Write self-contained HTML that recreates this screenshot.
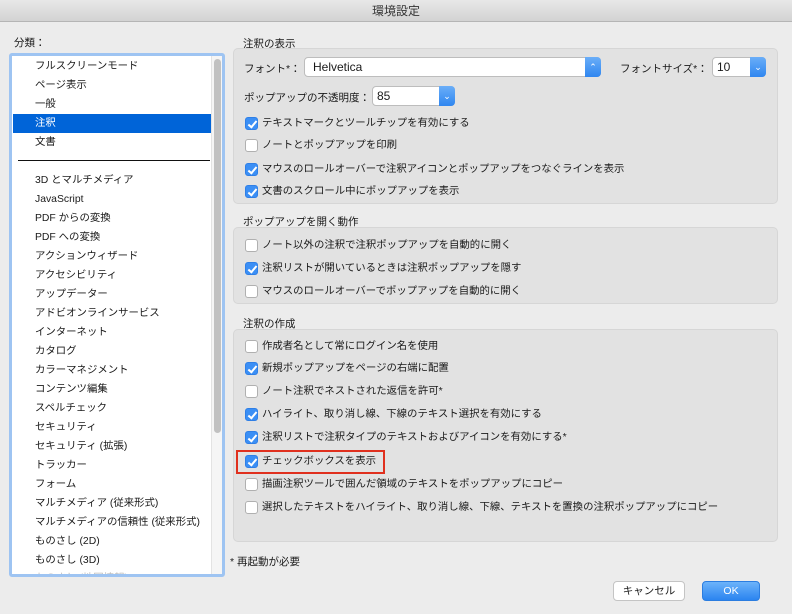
<!DOCTYPE html>
<html><head><meta charset="utf-8"><style>
*{margin:0;padding:0;box-sizing:border-box}
body{width:792px;height:614px;background:#ececec;font-family:"Liberation Sans","Noto Sans CJK JP",sans-serif;font-size:10.5px;color:#1a1a1a;position:relative;overflow:hidden}
.a{position:absolute;white-space:nowrap}
.title{left:0;top:0;width:792px;height:22px;background:linear-gradient(#e8e8e8,#d3d3d3);border-bottom:1px solid #b5b5b5;text-align:center;line-height:22px;font-size:12px;color:#333}
.list{left:9px;top:53px;width:216px;height:524px;border:3px solid #9ec4f2;border-radius:3px;background:#fff;overflow:hidden}
.li{position:absolute;left:23px;height:19px;line-height:19px;font-size:10.4px}
.sel{background:#0064d8;color:#fff;left:1px;width:198px;padding-left:22px}
.sb{position:absolute;left:199px;top:0;width:11px;height:100%;background:#f5f5f5;border-left:1px solid #e3e3e3}
.thumb{position:absolute;left:2px;top:3px;width:7px;height:374px;background:#c1c1c1;border-radius:4px}
.box{background:#e2e2e2;border:1px solid #d6d6d6;border-radius:5px}
.cb{position:absolute;left:245px;width:13px;height:13px;border-radius:3px;background:#fff;border:1px solid #b0b0b0}
.cb.on{background:#3b8ff5;border-color:#2f7fe6}
.cb.on::after{content:"";position:absolute;left:3.5px;top:1px;width:3px;height:7px;border:solid #fff;border-width:0 2px 2px 0;transform:rotate(40deg)}
.ct{position:absolute;left:262px;font-size:10.4px;line-height:14px}
.sel2{background:#fff;border:1px solid #bdbdbd;border-radius:4px;height:20px;line-height:18px;padding-left:8px;font-size:12px}
.arr{position:absolute;right:-1px;top:-1px;width:16px;height:20px;background:linear-gradient(#6aaef8,#2f86f0);border-radius:0 4px 4px 0;color:#fff;font-size:9px;text-align:center;line-height:20px}
.btn{height:20px;line-height:18px;text-align:center;border-radius:4px;font-size:10.5px}
</style></head><body>
<div class="a title">環境設定</div>
<div class="a" style="left:14px;top:35px">分類：</div>
<div class="a list">
<div class="li" style="top:1px">フルスクリーンモード</div>
<div class="li" style="top:20px">ページ表示</div>
<div class="li" style="top:39px">一般</div>
<div class="li sel" style="top:58px">注釈</div>
<div class="li" style="top:77px">文書</div>
<div style="position:absolute;left:6px;top:104px;width:192px;height:1px;background:#111"></div>
<div class="li" style="top:115px">3D とマルチメディア</div>
<div class="li" style="top:134px">JavaScript</div>
<div class="li" style="top:153px">PDF からの変換</div>
<div class="li" style="top:172px">PDF への変換</div>
<div class="li" style="top:191px">アクションウィザード</div>
<div class="li" style="top:210px">アクセシビリティ</div>
<div class="li" style="top:229px">アップデーター</div>
<div class="li" style="top:248px">アドビオンラインサービス</div>
<div class="li" style="top:267px">インターネット</div>
<div class="li" style="top:286px">カタログ</div>
<div class="li" style="top:305px">カラーマネジメント</div>
<div class="li" style="top:324px">コンテンツ編集</div>
<div class="li" style="top:343px">スペルチェック</div>
<div class="li" style="top:362px">セキュリティ</div>
<div class="li" style="top:381px">セキュリティ (拡張)</div>
<div class="li" style="top:400px">トラッカー</div>
<div class="li" style="top:419px">フォーム</div>
<div class="li" style="top:438px">マルチメディア (従来形式)</div>
<div class="li" style="top:457px">マルチメディアの信頼性 (従来形式)</div>
<div class="li" style="top:476px">ものさし (2D)</div>
<div class="li" style="top:495px">ものさし (3D)</div>
<div class="li" style="top:513px;color:#bbb">ものさし (地図情報)</div>
<div class="sb"><div class="thumb"></div></div>
</div>

<div class="a" style="left:243px;top:36px">注釈の表示</div>
<div class="a box" style="left:233px;top:48px;width:545px;height:156px"></div>
<div class="a" style="left:244px;top:61px">フォント*：</div>
<div class="a sel2" style="left:304px;top:57px;width:297px">Helvetica<div class="arr">⌃</div></div>
<div class="a" style="left:620px;top:61px">フォントサイズ*：</div>
<div class="a sel2" style="left:712px;top:57px;width:54px;padding-left:4px">10<div class="arr">⌄</div></div>
<div class="a" style="left:244px;top:90px">ポップアップの不透明度：</div>
<div class="a sel2" style="left:372px;top:86px;width:83px;padding-left:4px">85<div class="arr">⌄</div></div>
<div class="cb on" style="top:117px"></div><div class="ct" style="top:117px">テキストマークとツールチップを有効にする</div>
<div class="cb" style="top:139px"></div><div class="ct" style="top:139px">ノートとポップアップを印刷</div>
<div class="cb on" style="top:163px"></div><div class="ct" style="top:163px">マウスのロールオーバーで注釈アイコンとポップアップをつなぐラインを表示</div>
<div class="cb on" style="top:185px"></div><div class="ct" style="top:185px">文書のスクロール中にポップアップを表示</div>

<div class="a" style="left:243px;top:214px">ポップアップを開く動作</div>
<div class="a box" style="left:233px;top:227px;width:545px;height:77px"></div>
<div class="cb" style="top:239px"></div><div class="ct" style="top:239px">ノート以外の注釈で注釈ポップアップを自動的に開く</div>
<div class="cb on" style="top:262px"></div><div class="ct" style="top:262px">注釈リストが開いているときは注釈ポップアップを隠す</div>
<div class="cb" style="top:285px"></div><div class="ct" style="top:285px">マウスのロールオーバーでポップアップを自動的に開く</div>

<div class="a" style="left:243px;top:316px">注釈の作成</div>
<div class="a box" style="left:233px;top:329px;width:545px;height:213px"></div>
<div class="cb" style="top:340px"></div><div class="ct" style="top:340px">作成者名として常にログイン名を使用</div>
<div class="cb on" style="top:362px"></div><div class="ct" style="top:362px">新規ポップアップをページの右端に配置</div>
<div class="cb" style="top:385px"></div><div class="ct" style="top:385px">ノート注釈でネストされた返信を許可*</div>
<div class="cb on" style="top:408px"></div><div class="ct" style="top:408px">ハイライト、取り消し線、下線のテキスト選択を有効にする</div>
<div class="cb on" style="top:431px"></div><div class="ct" style="top:431px">注釈リストで注釈タイプのテキストおよびアイコンを有効にする*</div>
<div class="a" style="left:236px;top:450px;width:149px;height:24px;border:2px solid #e0301e"></div>
<div class="cb on" style="top:455px"></div><div class="ct" style="top:455px">チェックボックスを表示</div>
<div class="cb" style="top:478px"></div><div class="ct" style="top:478px">描画注釈ツールで囲んだ領域のテキストをポップアップにコピー</div>
<div class="cb" style="top:501px"></div><div class="ct" style="top:501px">選択したテキストをハイライト、取り消し線、下線、テキストを置換の注釈ポップアップにコピー</div>

<div class="a" style="left:230px;top:554px">* 再起動が必要</div>
<div class="a btn" style="left:613px;top:581px;width:72px;background:#fff;border:1px solid #c4c4c4">キャンセル</div>
<div class="a btn" style="left:702px;top:581px;width:58px;background:linear-gradient(#6cb3fa,#2b84f0);color:#fff;border:1px solid #2b7de0">OK</div>
</body></html>
